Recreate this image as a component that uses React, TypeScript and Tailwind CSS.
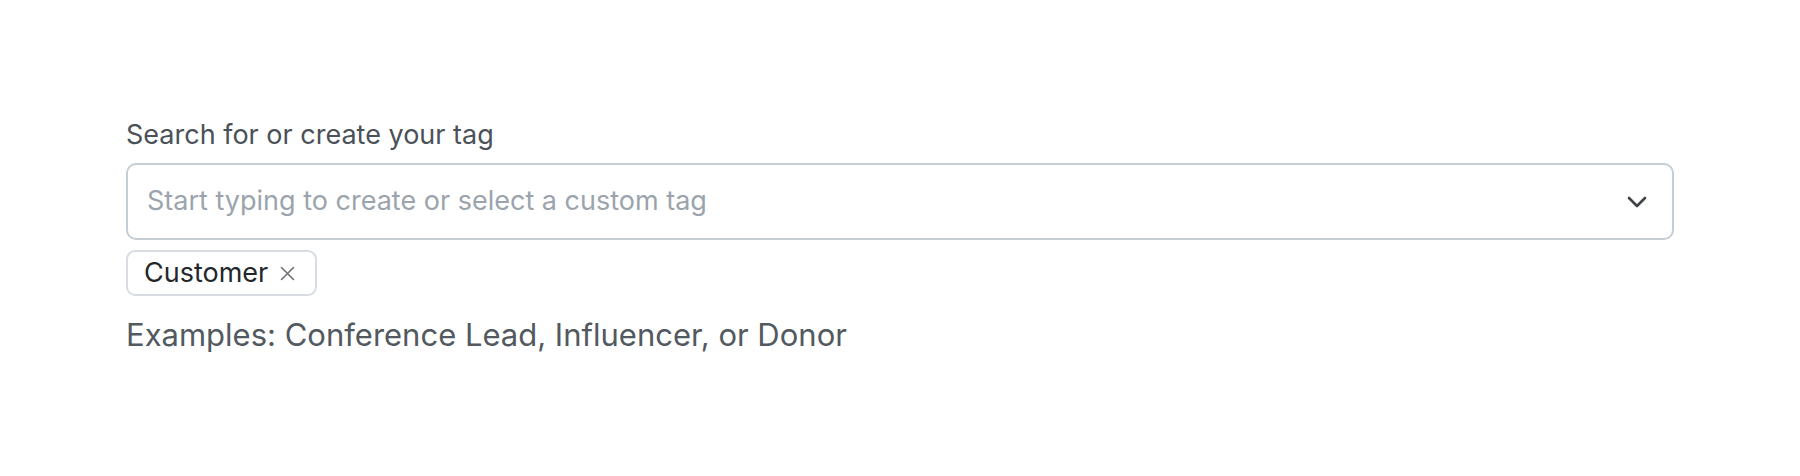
import React from 'react';

const ChevronDown = () => (
    <svg width="20" height="12" viewBox="0 0 20 12" fill="none">
        <path d="M2 2l8 8 8-8" stroke="#3d4349" strokeWidth="2.6" strokeLinecap="round" strokeLinejoin="round" />
    </svg>
);

const Cross = () => (
    <svg width="15" height="15" viewBox="0 0 15 15" fill="none">
        <path d="M1.5 1.5l12 12M13.5 1.5l-12 12" stroke="#6b7177" strokeWidth="1.6" strokeLinecap="round" />
    </svg>
);

export default function App() {
    return (
        <div className="min-h-screen bg-white px-[126px] pt-[118px]" style={{ fontFamily: 'Inter, "Open Sans", sans-serif' }}>
            {/* Label */}
            <label className="block text-[27px] leading-[34px] text-[#4b5158]">Search for or create your tag</label>

            {/* Select */}
            <div className="mt-[11px] flex h-[77px] items-center rounded-[10px] border-2 border-[#c5cdd5] pl-[19px] pr-[25px]">
                <span className="flex-1 text-[27px] text-[#9ba4ad]">Start typing to create or select a custom tag</span>
                <ChevronDown />
            </div>

            {/* Selected tags */}
            <div className="mt-[10px] flex">
                <span className="inline-flex h-[46px] items-center gap-[12px] rounded-[9px] border-2 border-[#d7dde3] pl-[16px] pr-[20px] text-[27px] text-[#22272b]">
                    Customer
                    <Cross />
                </span>
            </div>

            {/* Hint */}
            <p className="mt-[19px] text-[31px] leading-[40px] text-[#52595f]">Examples: Conference Lead, Influencer, or Donor</p>
        </div>
    );
}
